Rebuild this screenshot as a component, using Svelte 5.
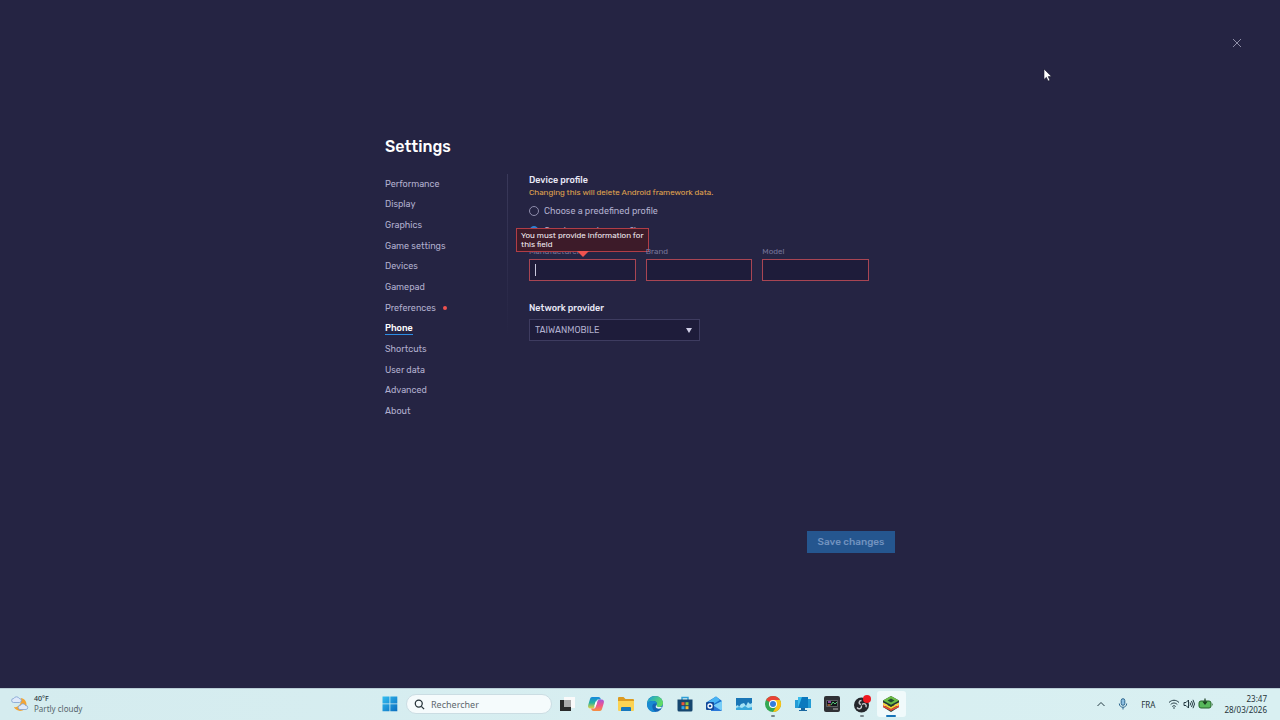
<script lang="ts">
	const sections = [
		'Performance',
		'Display',
		'Graphics',
		'Game settings',
		'Devices',
		'Gamepad',
		'Preferences',
		'Phone',
		'Shortcuts',
		'User data',
		'Advanced',
		'About'
	];

	let active = $state('Phone');
	let profile = $state('custom');
	let provider = $state('TAIWANMOBILE');
	let manufacturer = $state('');
	let brand = $state('');
	let model = $state('');
</script>

<div class="screen">
	<main class="window">
		<button class="close" aria-label="Close">
			<svg viewBox="0 0 10 10"><path d="M1 1l8 8M9 1l-8 8" /></svg>
		</button>

		<svg class="pointer" viewBox="0 0 10 14" aria-hidden="true">
			<path d="M1 1v10.5l2.4-2.2 1.700 3.800 1.800-.8-1.700-3.700h3.300z" />
		</svg>

		<div class="settings">
			<h1>Settings</h1>

			<div class="columns">
				<nav>
					{#each sections as section}
						<a
							href="#{section}"
							class:active={active === section}
							onclick={() => (active = section)}
						>
							<span>{section}</span>
							{#if section === 'Preferences'}<i class="dot"></i>{/if}
						</a>
					{/each}
				</nav>

				<div class="divider"></div>

				<form class="panel">
					<h2>Device profile</h2>
					<p class="warning">Changing this will delete Android framework data.</p>

					<label class="radio">
						<input type="radio" name="profile" value="predefined" bind:group={profile} />
						Choose a predefined profile
					</label>
					<label class="radio">
						<input type="radio" name="profile" value="custom" bind:group={profile} />
						Create a custom profile
					</label>

					<div class="fields">
						<div class="field">
							<label for="manufacturer">Manufacturer</label>
							<input id="manufacturer" class="current" type="text" bind:value={manufacturer} />
							<div class="tooltip" role="alert">You must provide information for this field</div>
						</div>
						<div class="field">
							<label for="brand">Brand</label>
							<input id="brand" type="text" bind:value={brand} />
						</div>
						<div class="field">
							<label for="model">Model</label>
							<input id="model" type="text" bind:value={model} />
						</div>
					</div>

					<label class="heading" for="provider">Network provider</label>
					<div class="select">
						<select id="provider" bind:value={provider}>
							<option>TAIWANMOBILE</option>
						</select>
						<svg viewBox="0 0 6 5" aria-hidden="true"><path d="M0 0h6l-3 5z" /></svg>
					</div>
				</form>
			</div>

			<button class="save" disabled>Save changes</button>
		</div>
	</main>

	<footer class="taskbar">
		<button class="weather">
			<svg viewBox="0 0 18 18" aria-hidden="true">
				<path d="M10 3a6.500 6.500 0 1 1-7 9c4 1 8-3 7-9z" fill="#f3a536" />
				<path d="M2.500 7.500a2 2 0 0 1 .3-4 3 3 0 0 1 5.400 0 2 2 0 0 1 .3 4z" fill="#dfe9fa" stroke="#7f9fd0" stroke-width=".8" />
				<path d="M9 14.500a2 2 0 0 1 .3-4 2.800 2.800 0 0 1 5.200 0 2 2 0 0 1 .5 4z" fill="#dfe9fa" stroke="#7f9fd0" stroke-width=".8" />
			</svg>
			<span>
				<b>40°F</b>
				<small>Partly cloudy</small>
			</span>
		</button>

		<div class="center">
			<button class="start" aria-label="Start">
				<svg viewBox="0 0 16 16">
					<defs>
						<linearGradient id="win" x1="0" y1="0" x2="16" y2="16" gradientUnits="userSpaceOnUse">
							<stop stop-color="#35c0f2" />
							<stop offset="1" stop-color="#0869bd" />
						</linearGradient>
					</defs>
					<path d="M.5.5h7v7h-7zM8.300.5h7v7h-7zM.5 8.300h7v7h-7zM8.300 8.300h7v7h-7z" fill="url(#win)" />
				</svg>
			</button>

			<label class="search">
				<svg viewBox="0 0 12 12" aria-hidden="true"><circle cx="5.200" cy="5" r="3.800" /><path d="M8 8l3 3" /></svg>
				<input type="text" placeholder="Rechercher" />
			</label>

			<div class="apps">
				<button aria-label="Task view">
					<svg viewBox="0 0 18 18">
						<path d="M6 2h11v11H6z" fill="#fafafa" />
						<path d="M2 5h11v11H2z" fill="#292929" />
						<path d="M6 5h7v7H6z" fill="#aaa" />
					</svg>
				</button>
				<button aria-label="Copilot">
					<svg viewBox="0 0 18 18">
						<defs>
							<linearGradient id="copA" x2="0" y2="1">
								<stop stop-color="#1688df" />
								<stop offset=".5" stop-color="#25b2a0" />
								<stop offset="1" stop-color="#f0d13b" />
							</linearGradient>
							<linearGradient id="copB" x2="0" y2="1">
								<stop stop-color="#a357db" />
								<stop offset=".5" stop-color="#f0558c" />
								<stop offset="1" stop-color="#f6903f" />
							</linearGradient>
						</defs>
						<path d="M5 2h6.500c1.500 0 2 1 2.400 2.500h-2.500c-1.200 0-1.700.6-2 1.600L7.600 11.500C7 13 6.300 13.500 5 13.500H3.500C1.500 13.500.6 12 1.200 10L3 4C3.400 2.700 4 2 5 2z" fill="url(#copA)" />
						<path d="M13 16H6.500c-1.500 0-2-1-2.400-2.500h2.500c1.200 0 1.700-.6 2-1.600l1.800-5.400C11 5 11.700 4.500 13 4.500h1.500c2 0 2.900 1.500 2.300 3.500L15 14c-.4 1.300-1 2-2 2z" fill="url(#copB)" />
						<path d="M8.600 6.500h1.600l-1.400 5H7.100z" fill="#fff" />
					</svg>
				</button>
				<button aria-label="File Explorer">
					<svg viewBox="0 0 18 18">
						<path d="M1 3q0-1 1-1h4.500l2 2H16q1 0 1 1v3H1z" fill="#dc9b21" />
						<path d="M1 6h16v9q0 1-1 1H2q-1 0-1-1z" fill="#fbd354" />
						<path d="M4 16v-3q0-1 1-1h8q1 0 1 1v3z" fill="#1678be" />
					</svg>
				</button>
				<button aria-label="Edge">
					<svg viewBox="0 0 18 18">
						<defs>
							<linearGradient id="edge" x2="1" y2=".4">
								<stop stop-color="#139be0" />
								<stop offset="1" stop-color="#62dc65" />
							</linearGradient>
						</defs>
						<circle cx="9" cy="9" r="8" fill="#1262b5" />
						<path d="M1 8.500C1.500 4 5 1 9 1c5 0 8 3.500 8 7 0 2.500-1.800 4-4 4-1.500 0-3-.5-2.500-1.500C12 8 10 6 7 6 4 6 2 7 1 8.500z" fill="url(#edge)" />
						<path d="M1 8.500C2 6.800 4 6 7 6c2.500 0 3.800 1.500 3.800 3C7.500 7.500 5.500 10 6.500 13c.5 1.700 1.700 3 3.500 4-5 .7-9.500-3-9-8.500z" fill="#188bd2" />
						<path d="M10.700 9.200c-.9 1.800.5 3.600 5.300 2.600l-.8 1.400c-4.200 1.500-7-.9-4.500-4z" fill="#e5f6f7" />
					</svg>
				</button>
				<button aria-label="Microsoft Store">
					<svg viewBox="0 0 18 18">
						<path d="M6 5V2.500h6V5" fill="none" stroke="#2d9ed8" stroke-width="1.400" />
						<path d="M1.500 4.500h15V15q0 1.500-1.500 1.500H3q-1.500 0-1.500-1.500z" fill="#16466f" />
						<path d="M5.500 7.200h3v3h-3z" fill="#ee5535" />
						<path d="M9.500 7.200h3v3h-3z" fill="#8ac640" />
						<path d="M5.500 11.200h3v3h-3z" fill="#31a6ea" />
						<path d="M9.500 11.200h3v3h-3z" fill="#f5bd32" />
					</svg>
				</button>
				<button aria-label="Outlook">
					<svg viewBox="0 0 18 18">
						<path d="M2 7l9-5.500L17 6v8q0 2-2 2H7z" fill="#1a72d0" />
						<path d="M3 7l8-5.500L15 5l-8 5z" fill="#48b4f4" />
						<path d="M7 11l10-5v8q0 2-2 2H8z" fill="#77cdf7" />
						<path d="M6 9l11 7H6z" fill="#2877d9" />
						<rect x="1" y="7" width="8" height="8" rx="1" fill="#124a9b" />
						<circle cx="5" cy="11" r="2" fill="none" stroke="#fff" stroke-width="1.300" />
					</svg>
				</button>
				<button aria-label="Monitor">
					<svg viewBox="0 0 18 18">
						<path d="M1 3h16v12H1z" fill="#a5e2f5" />
						<path d="M1 3h16v5l-2 1-2-2-2 4-2-3-3 1-2 3-1-2-2 1z" fill="#1976b6" />
						<path d="M1 13l3-1 3 1 3-2 3 2 4-1v3H1z" fill="#39a9dc" />
					</svg>
				</button>
				<button class="running" aria-label="Chrome">
					<svg viewBox="0 0 18 18">
						<circle cx="9" cy="9" r="8" fill="#35a853" />
						<path d="M9 9L2.100 5A8 8 0 0 1 16 5z" fill="#e94335" />
						<path d="M9 9V5h7A8 8 0 0 1 9 17l3.500-6z" fill="#fbc116" />
						<circle cx="9" cy="9" r="4" fill="#fff" />
						<circle cx="9" cy="9" r="3" fill="#347ddd" />
					</svg>
				</button>
				<button aria-label="Remote desktop">
					<svg viewBox="0 0 18 18">
						<path d="M1 5h4v8H1zM13 4h4v9h-4z" fill="#249cd5" />
						<path d="M4 2h10v11H4z" fill="#39bceb" />
						<path d="M8 2h6v11H4z" fill="#0b79be" />
						<path d="M7 13h4v2h2v1H5v-1h2z" fill="#1766a0" />
					</svg>
				</button>
				<button aria-label="System tools">
					<svg viewBox="0 0 18 18">
						<rect x="1" y="1" width="16" height="16" rx="2" fill="#303135" />
						<path d="M3.500 5.500h11v6h-11z" fill="#141619" stroke="#77797c" stroke-width=".7" />
						<path d="M5 7h3" stroke="#bd65dd" stroke-width="1.400" />
						<path d="M8 10l2-3 2 2 2-2" fill="none" stroke="#52c678" />
						<path d="M4.500 10h3" stroke="#e58a45" stroke-width="1.200" />
						<path d="M10 14h5" stroke="#bbb" />
					</svg>
				</button>
				<button class="running" aria-label="OBS Studio">
					<svg viewBox="0 0 18 18">
						<circle cx="8.500" cy="10" r="7.500" fill="#24262b" />
						<path d="M8 9.500c-3-1-2-4 .5-4M9 9.500c2.500-2 5 0 4 2.700M8.500 10.500c.5 3-2.500 4.500-4.500 2" fill="none" stroke="#c4c6cb" stroke-width="1.400" />
						<circle cx="14" cy="4" r="4" fill="#ee1820" />
					</svg>
				</button>
				<button class="running current-app" aria-label="BlueStacks">
					<svg viewBox="0 0 18 18">
						<path d="M1 12l8-4 8 4-8 5z" fill="#163b35" />
						<path d="M1 10v2l8 4 8-4v-2l-8 4z" fill="#e64835" />
						<path d="M1 7.500v2.200L9 14l8-4.300V7.500L9 12z" fill="#f8cf34" />
						<path d="M1 5.500L9 1l8 4.500V7.500l-8 4-8-4z" fill="#24382f" />
						<path d="M1 5.500L9 1l8 4.500-8 4.300z" fill="#6cbe45" />
						<path d="M5.500 5.500L9 3.500l3.500 2L9 7.500z" fill="#214c32" />
					</svg>
				</button>
			</div>
		</div>

		<div class="tray">
			<button aria-label="Show hidden icons">
				<svg class="line" viewBox="0 0 10 12"><path d="M1.500 8L5 4.500 8.500 8" /></svg>
			</button>
			<button class="mic" aria-label="Microphone">
				<svg class="line" viewBox="0 0 10 12">
					<rect x="3.200" y=".7" width="3.600" height="6.600" rx="1.800" fill="#8dbfe0" />
					<path d="M1.300 5.500c0 5 7.400 5 7.400 0M5 9.200v2.300" />
				</svg>
			</button>
			<button class="language">FRA</button>
			<button class="status" aria-label="Network, volume and battery">
				<svg class="line" viewBox="0 0 12 12">
					<path d="M1 4.500c3-3 7-3 10 0M2.700 6.500c2-2 4.600-2 6.600 0M4.300 8.500c1-1 2.400-1 3.400 0" />
					<circle cx="6" cy="10" r=".8" fill="#243a42" stroke="none" />
				</svg>
				<svg class="line" viewBox="0 0 12 12">
					<path d="M1 4.500h2L5.500 2v8L3 7.500H1zM7 4.500q1 1.500 0 3M8.500 3q2 3 0 6M10 1.800q3 4.200 0 8.400" />
				</svg>
				<svg class="battery" viewBox="0 0 16 12">
					<rect x="1" y="3" width="12" height="7" rx="2" fill="#58b85c" stroke="#28632d" />
					<path d="M14 5q1.500 1.500 0 3z" fill="#28632d" />
					<path d="M7 .5v5M5 3.500l2 2.500 2-2.500" fill="none" stroke="#173a1c" stroke-width="1.200" />
				</svg>
			</button>
			<button class="clock">
				<span>23:47</span>
				<span>28/03/2026</span>
			</button>
		</div>
	</footer>
</div>

<style>
	:global(body) {
		margin: 0;
		background: #252443;
	}

	* {
		box-sizing: border-box;
	}

	button,
	input,
	select {
		font: inherit;
		color: inherit;
		margin: 0;
		padding: 0;
		border: 0;
		background: none;
	}

	.screen {
		min-height: 100vh;
		display: flex;
		flex-direction: column;
		font-family: Rubik, Roboto, 'Liberation Sans', sans-serif;
		font-size: 9px;
		line-height: 12px;
		color: #b1afce;
	}

	.window {
		position: relative;
		flex: 1;
		display: flex;
		align-items: center;
		justify-content: center;
		background: #252443;
	}

	.close {
		position: absolute;
		top: 37px;
		right: 37px;
		width: 12px;
		height: 12px;
		display: grid;
		place-items: center;
	}

	.close svg {
		width: 10px;
		height: 10px;
		fill: none;
		stroke: #aaa8c0;
		stroke-width: 0.8;
	}

	.pointer {
		position: absolute;
		top: 68px;
		left: 1043px;
		width: 10px;
		height: 14px;
		fill: #fff;
		stroke: #17172b;
		stroke-width: 0.6;
	}

	.settings {
		width: 510px;
		min-height: 418px;
		padding-top: 1px;
		display: flex;
		flex-direction: column;
	}

	h1 {
		margin: 0 0 16px;
		font-size: 16px;
		line-height: 22px;
		font-weight: 500;
		color: #fff;
	}

	.columns {
		flex: 1;
		display: flex;
		align-items: flex-start;
	}

	nav {
		width: 122px;
		height: 248px;
		display: grid;
		grid-auto-rows: 1fr;
	}

	nav a {
		display: flex;
		align-items: center;
		gap: 7px;
		color: inherit;
		text-decoration: none;
	}

	nav a span {
		border-bottom: 1px solid transparent;
	}

	nav .active span {
		color: #fff;
		font-weight: 500;
		border-color: #2d8ee5;
	}

	.dot {
		width: 4px;
		height: 4px;
		border-radius: 50%;
		background: #f0524f;
	}

	.divider {
		width: 1px;
		height: 162px;
		background: linear-gradient(#3a395a, #35345500);
	}

	.panel {
		width: 340px;
		margin-left: 21px;
		display: flex;
		flex-direction: column;
	}

	h2,
	.heading {
		margin: 0;
		font-size: 9px;
		line-height: 12px;
		font-weight: 500;
		color: #e9e8f6;
	}

	.warning {
		margin: 0 0 1px;
		font-size: 8px;
		line-height: 14px;
		color: #e0a44e;
	}

	.radio {
		height: 20px;
		display: flex;
		align-items: center;
		gap: 5px;
	}

	.radio input {
		appearance: none;
		width: 10px;
		height: 10px;
		border: 1px solid #8f8dac;
		border-radius: 50%;
	}

	.radio input:checked {
		border-color: #2d7fd3;
		background: #2d7fd3;
	}

	.fields {
		display: grid;
		grid-template-columns: repeat(3, 1fr);
		gap: 10px;
		margin: 5px 0 21px;
	}

	.field {
		position: relative;
		display: flex;
		flex-direction: column;
		gap: 1px;
	}

	.field label {
		font-size: 8px;
		line-height: 12px;
		color: #77759a;
	}

	.field input {
		width: 100%;
		height: 22px;
		padding: 0 5px;
		border: 1px solid #a94553;
		outline: 0;
		background: #1e1c3a;
	}

	.field .current {
		background: linear-gradient(#c9c8de, #c9c8de) 5px 4px / 1px 12px no-repeat #1e1c3a;
	}

	.tooltip {
		position: absolute;
		left: -13px;
		bottom: 29px;
		width: 133px;
		padding: 2px 4px;
		border: 1px solid #b13d46;
		background: #3d1b29;
		font-size: 8px;
		line-height: 9px;
		color: #f3edf2;
	}

	.tooltip::after {
		content: '';
		position: absolute;
		top: 100%;
		left: 60px;
		border: 6px solid transparent;
		border-top-color: #f0524f;
		border-bottom: 0;
	}

	.select {
		position: relative;
		width: 171px;
		margin-top: 5px;
	}

	.select select {
		appearance: none;
		display: block;
		width: 100%;
		height: 22px;
		padding: 0 5px;
		border: 1px solid #3e3c60;
		border-radius: 0;
		background: #1e1c3a;
	}

	.select svg {
		position: absolute;
		top: 9px;
		right: 8px;
		width: 6px;
		height: 5px;
		fill: #cfcee5;
		pointer-events: none;
	}

	.save {
		align-self: flex-end;
		width: 88px;
		height: 22px;
		background: #25568f;
		font-size: 10px;
		font-weight: 500;
		color: #7192bf;
	}

	.taskbar {
		height: 32px;
		display: grid;
		grid-template-columns: 1fr auto 1fr;
		background: linear-gradient(90deg, #d5ecef, #d9f0f2);
		box-shadow: inset 0 1px #b9cdd6;
		font-family: 'Noto Sans', sans-serif;
		font-size: 8px;
		line-height: 11px;
		color: #26343a;
	}

	.taskbar svg {
		display: block;
	}

	.weather {
		display: flex;
		align-items: center;
		gap: 5px;
		padding-left: 11px;
		text-align: left;
	}

	.weather svg {
		width: 18px;
		height: 18px;
	}

	.weather span {
		display: grid;
	}

	.weather b {
		font-size: 7px;
		line-height: 10px;
		font-weight: 500;
	}

	.weather small {
		font-size: 8px;
		line-height: 10px;
		color: #56666d;
	}

	.center {
		display: flex;
		align-items: center;
		padding-left: 8px;
	}

	.start svg {
		width: 16px;
		height: 16px;
	}

	.search {
		width: 146px;
		height: 20px;
		margin-left: 8px;
		padding: 0 7px;
		display: flex;
		align-items: center;
		gap: 6px;
		border: 1px solid #cbdde3;
		border-radius: 10px;
		background: #f5fbfc;
	}

	.search svg {
		flex: none;
		width: 11px;
		height: 11px;
		fill: none;
		stroke: #27343a;
		stroke-width: 1.4;
	}

	.search input {
		min-width: 0;
		flex: 1;
		font-size: 9px;
		outline: 0;
	}

	.search input::placeholder {
		color: #5d686e;
		opacity: 1;
	}

	.apps {
		width: 354px;
		height: 100%;
		display: flex;
		align-items: center;
	}

	.apps button {
		position: relative;
		flex: 1;
		height: 26px;
		display: grid;
		place-items: center;
		border-radius: 3px;
	}

	.apps svg {
		width: 18px;
		height: 18px;
	}

	.apps .running::after {
		content: '';
		position: absolute;
		bottom: 0;
		width: 4px;
		height: 2px;
		border-radius: 1px;
		background: #78868b;
	}

	.apps .current-app {
		background: #f0fafb;
	}

	.apps .current-app::after {
		width: 10px;
		background: #1674b8;
	}

	.tray {
		display: flex;
		align-items: center;
		justify-content: flex-end;
		gap: 10px;
		padding-right: 13px;
	}

	.tray svg {
		width: 12px;
		height: 12px;
	}

	.tray .line {
		fill: none;
		stroke: #243a42;
		stroke-width: 1;
	}

	.tray .mic .line {
		stroke: #2d668e;
	}

	.language {
		padding: 0 3px 0 2px;
	}

	.status {
		display: flex;
		gap: 3px;
	}

	.status .battery {
		width: 16px;
	}

	.clock {
		display: grid;
		text-align: right;
	}
</style>
